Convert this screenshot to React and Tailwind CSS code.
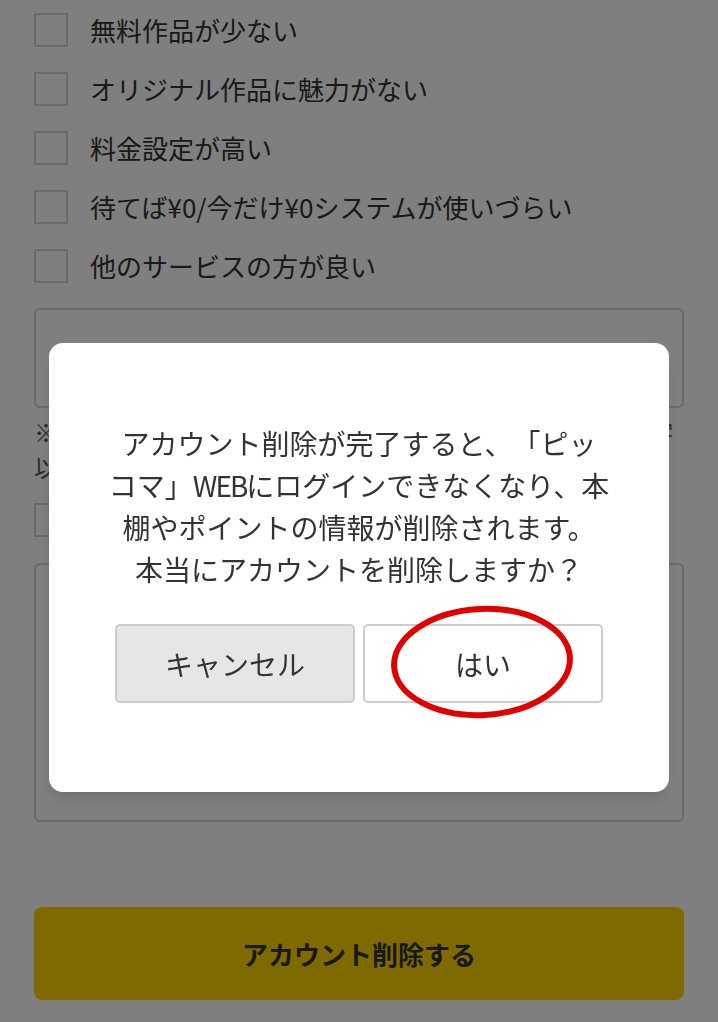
import React from "react";

const reasons = [
  "無料作品が少ない",
  "オリジナル作品に魅力がない",
  "料金設定が高い",
  "待てば¥0/今だけ¥0システムが使いづらい",
  "他のサービスの方が良い",
];

const font = { fontFamily: '"Noto Sans CJK JP", "Noto Sans", sans-serif' };

function CheckRow({ label }) {
  return (
    <label className="flex items-center h-[34px] gap-[22px]">
      <span className="w-[34px] h-[34px] border-2 border-[#d4d4d4] bg-white shrink-0" />
      <span className="text-[26px] leading-none text-[#333] whitespace-nowrap">{label}</span>
    </label>
  );
}

function ConfirmDialog() {
  return (
    <div className="fixed inset-0 bg-black/50 flex justify-center items-start pt-[343px]">
      <div className="w-[620px] h-[449px] bg-white rounded-[14px] shadow-lg flex flex-col items-center pt-[79px]">
        <p className="text-[28px] leading-[42px] text-[#333] text-center [text-spacing-trim:space-all]">
          アカウント削除が完了すると、「ピッ
          <br />
          コマ」<span className="tracking-[-2px]">WEB</span>にログインできなくなり、本
          <br />
          棚やポイントの情報が削除されます。
          <br />
          本当にアカウントを削除しますか？
        </p>
        <div className="flex gap-2 mt-[34px]">
          <button className="w-[240px] h-[79px] rounded-[5px] border-2 border-[#cccccc] bg-[#e6e6e6] text-[28px] text-[#333]">
            キャンセル
          </button>
          <div className="relative">
            <button className="w-[240px] h-[79px] rounded-[5px] border-2 border-[#cccccc] bg-white text-[28px] text-[#333]">
              はい
            </button>
            <svg
              className="absolute left-[26px] top-[-19px] pointer-events-none"
              width="186"
              height="116"
              viewBox="0 0 186 116"
            >
              <ellipse
                cx="93"
                cy="57"
                rx="88"
                ry="53"
                fill="none"
                stroke="#e00000"
                strokeWidth="6"
                transform="rotate(-3 93 57)"
              />
            </svg>
          </div>
        </div>
      </div>
    </div>
  );
}

export default function App() {
  return (
    <div className="relative min-h-[1022px] bg-white" style={font}>
      <div className="px-[34px] pt-[13px] pb-[22px] flex flex-col">
        <div className="flex flex-col gap-[25px]">
          {reasons.map((r) => (
            <CheckRow key={r} label={r} />
          ))}
        </div>

        <textarea className="mt-[25px] h-[100px] w-full border-2 border-[#d4d4d4] rounded-[6px] resize-none" />

        <p className="mt-[6px] text-[24px] leading-[35px] text-[#555] whitespace-nowrap [text-spacing-trim:space-all]">
          ※ご要望などございましたらご記入ください（最大500文字
          <br />
          以内）
        </p>

        <div className="mt-[19px]">
          <CheckRow label="その他" />
        </div>

        <textarea className="mt-[26px] h-[259px] w-full border-2 border-[#d4d4d4] rounded-[6px] resize-none" />

        <button className="mt-[85px] h-[93px] w-full rounded-[8px] bg-[#ffd400] text-[26px] font-bold text-[#333]">
          アカウント削除する
        </button>
      </div>

      <ConfirmDialog />
    </div>
  );
}
